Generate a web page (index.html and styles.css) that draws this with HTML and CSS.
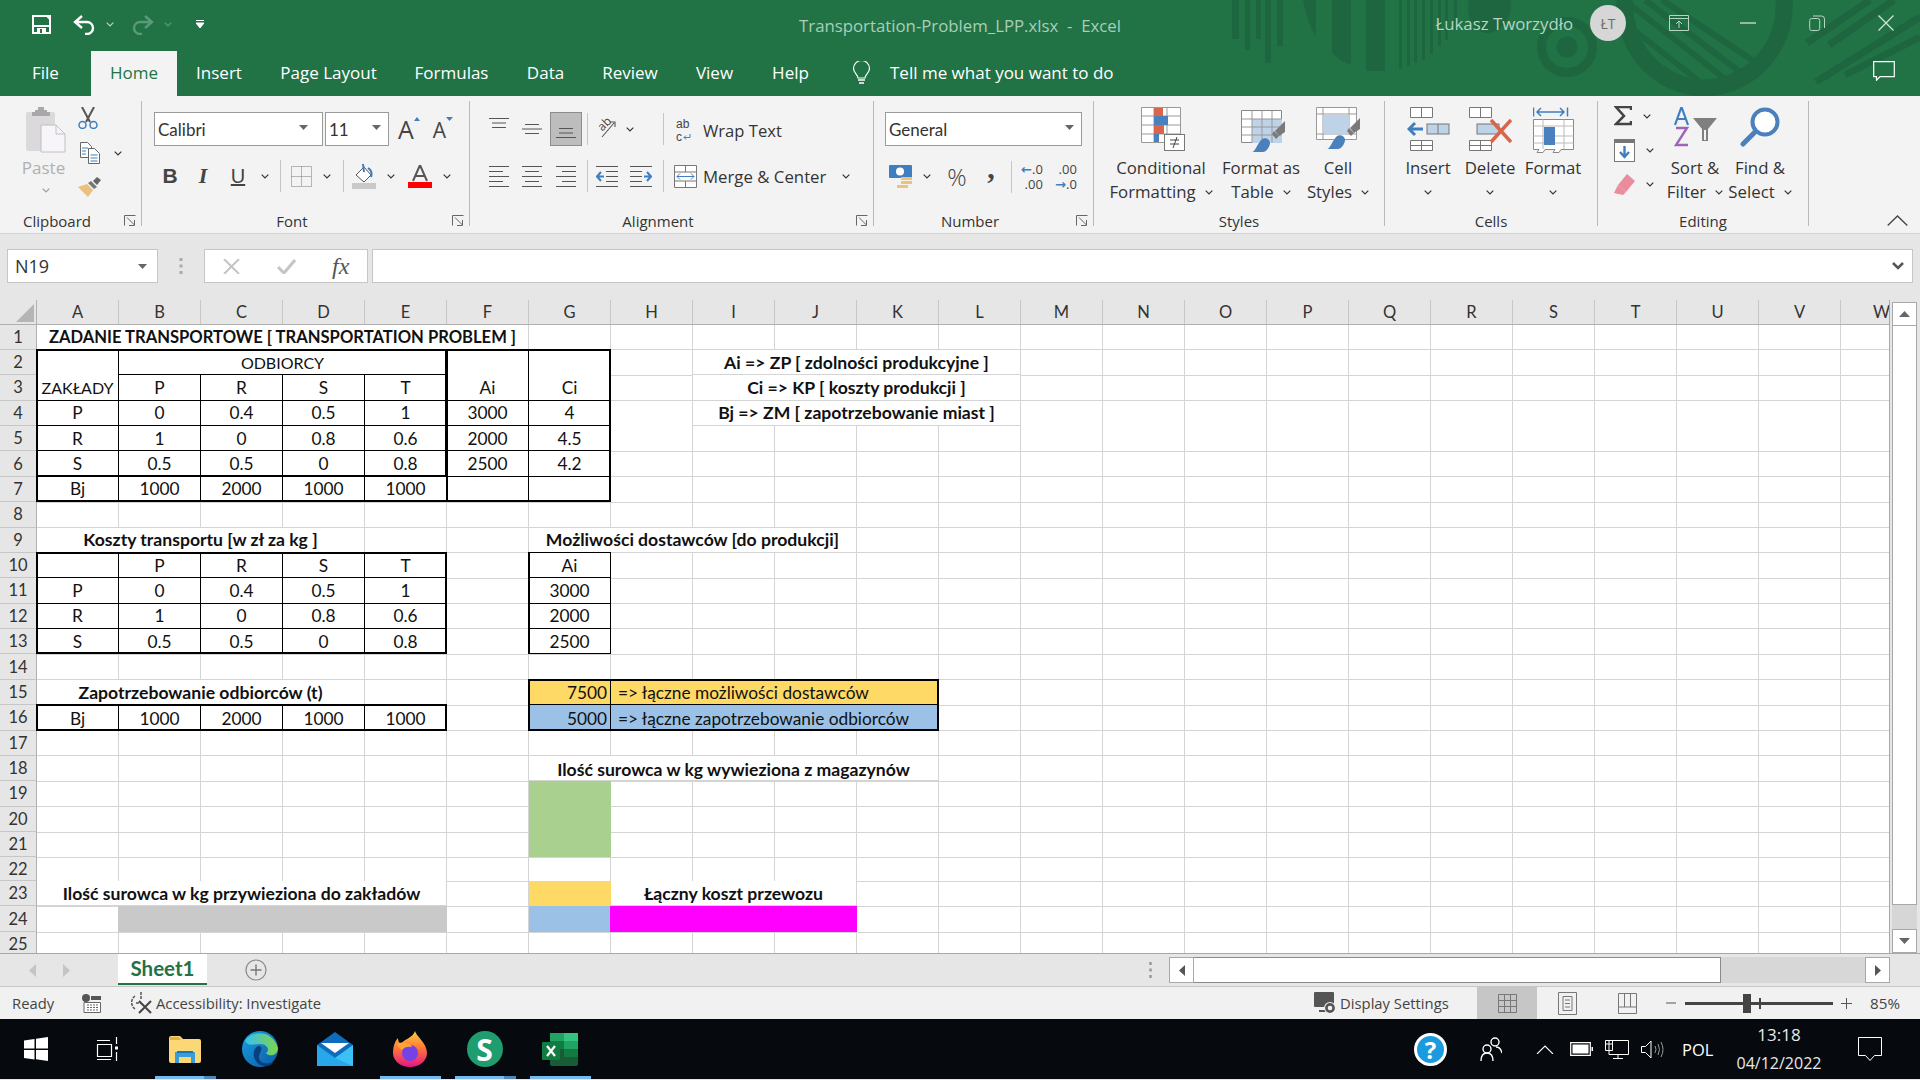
FILE: index.html
```html
<!DOCTYPE html>
<html lang="pl">
<head>
<meta charset="utf-8">
<title>Transportation-Problem_LPP.xlsx - Excel</title>
<link rel="stylesheet" href="styles.css">
</head>
<body>
<svg class="defs" width="0" height="0" aria-hidden="true">
  <symbol id="chev" viewBox="0 0 8 5"><path d="M.7.7 4 4 7.300.7" fill="none" stroke="currentColor" stroke-width="1.200"/></symbol>
  <symbol id="launch" viewBox="0 0 12 11"><path d="M.5 10.500V.5h11M3 2.500l7.500 7.500M10.500 5v5.500H5" fill="none" stroke="#666" stroke-width="1"/></symbol>
  <symbol id="caret" viewBox="0 0 9 5"><path d="M0 0h9L4.500 5z" fill="#666"/></symbol>
</svg>

<header class="top">
  <svg class="art" width="700" height="96" viewBox="1220 0 700 96" aria-hidden="true">
    <g fill="#1e6640">
      <rect x="1232" width="7" height="39"/><rect x="1245" width="5" height="50"/><rect x="1256" width="5" height="39"/><rect x="1265" width="6" height="63"/><rect x="1277" width="6" height="46"/>
      <path d="M1303 0h13v37q-9-15-13-37z"/><path d="M1332 0h19v65q-11-4-19-12z"/><rect x="1366" width="19" height="71"/>
      <rect x="1399" width="3" height="69"/><rect x="1407" width="3" height="66"/><rect x="1414" width="3" height="63"/><rect x="1422" width="3" height="60"/><rect x="1430" width="3" height="54"/><rect x="1438" width="3" height="46"/><rect x="1445" width="3" height="40"/><rect x="1454" width="3" height="30"/>
      <path d="M1469 0h41q3 12-4 22-8 12-20 11-11-2-16-13-3-10-1-20z"/>
    </g>
    <circle cx="1567" cy="47" r="25.500" fill="none" stroke="#1e6640" stroke-width="9"/>
    <circle cx="1567" cy="47" r="10.500" fill="#1e6640"/>
    <path d="M1625 0a82 82 0 0 0 77 88 82 82 0 0 0 82-88" fill="none" stroke="#1e6640" stroke-width="17"/>
    <path d="M1624 0l100 78M1645 0l95 72M1662 0l90 60M1630 27l70 55" stroke="#1e6640" stroke-width="6" fill="none"/>
    <path d="M1870 0l-63 43M1894 0l-65 45M1920 17l-104 65M1920 37l-75 38" stroke="#1e6640" stroke-width="7" fill="none"/>
  </svg>
  <div class="titlebar">
    <div class="qat">
      <svg class="q-save" width="19" height="19" viewBox="0 0 19 19"><path d="M1 1h14l3 3v14H1z" fill="none" stroke="#fff" stroke-width="2"/><path d="M1 1h17v10H1z" fill="none" stroke="#fff" stroke-width="2"/><path d="M5 13h9v5H5z" fill="#fff"/><path d="M8 14v4h2v-4z" fill="#217346"/></svg>
      <svg class="q-undo" width="23" height="20" viewBox="0 0 23 20"><path d="M9 1 2 7l7 6M2 7h12a6 6 0 0 1 0 12h-2" fill="none" stroke="#fff" stroke-width="2.400"/></svg>
      <svg class="q-uc" width="8" height="5"><use href="#chev"/></svg>
      <svg class="q-redo" width="23" height="20" viewBox="0 0 23 20"><path d="M14 1l7 6-7 6M21 7H9a6 6 0 0 0 0 12h2" fill="none" stroke="#5a9a78" stroke-width="2.400"/></svg>
      <svg class="q-rc" width="8" height="5"><use href="#chev"/></svg>
      <svg class="q-cust" width="8" height="9" viewBox="0 0 8 9"><path d="M0 .5h8M0 3h8L4 8z" stroke="#fff" fill="#fff" stroke-width="1"/></svg>
    </div>
    <div class="doc">Transportation-Problem_LPP.xlsx &nbsp;-&nbsp; Excel</div>
    <div class="account">
      <span class="user">Łukasz Tworzydło</span>
      <span class="avatar">ŁT</span>
      <span class="win"><svg width="20" height="16" viewBox="0 0 20 16"><path d="M.5.500h19v15H.5zM.5 3.500h19M10 13V6M7 9l3-3 3 3" fill="none" stroke="#b7d5c3" stroke-width="1"/></svg></span>
      <span class="win"><svg width="16" height="2" viewBox="0 0 16 2"><path d="M0 1h16" stroke="#b7d5c3" stroke-width="1.500"/></svg></span>
      <span class="win"><svg width="16" height="16" viewBox="0 0 16 16"><path d="M.7 5.500a2 2 0 0 1 2-2h6a2 2 0 0 1 2 2v8a2 2 0 0 1-2 2h-6a2 2 0 0 1-2-2zM4 1h8.500a3 3 0 0 1 3 3v9" fill="none" stroke="#b7d5c3" stroke-width="1"/></svg></span>
      <span class="win"><svg width="16" height="16" viewBox="0 0 16 16"><path d="M.5.500l15 15M15.500.500l-15 15" stroke="#d5e6db" stroke-width="1.200"/></svg></span>
    </div>
  </div>
  <nav class="tabs">
    <span class="tab tab-file">File</span>
    <span class="tab active">Home</span>
    <span class="tab">Insert</span>
    <span class="tab">Page Layout</span>
    <span class="tab">Formulas</span>
    <span class="tab">Data</span>
    <span class="tab">Review</span>
    <span class="tab">View</span>
    <span class="tab">Help</span>
    <span class="tell">
      <svg width="19" height="24" viewBox="0 0 19 24"><path d="M6 17c0-3-4.500-5-4.500-9.500a8 8 0 0 1 16 0C17.500 12 13 14 13 17z" fill="none" stroke="#fff" stroke-width="1.200"/><path d="M6 19h7M7 22h5" stroke="#fff" stroke-width="1.600"/></svg>
      Tell me what you want to do
    </span>
    <svg class="comment" width="22" height="20" viewBox="0 0 22 20"><path d="M.7.700h20.600v15H7l-3.500 3.500v-3.500H.7z" fill="none" stroke="#fff" stroke-width="1.200"/></svg>
  </nav>
</header>

<section class="ribbon">
  <div class="group g-clip">
    <div class="clip-body">
      <div class="paste">
        <svg width="41" height="46" viewBox="0 0 41 46"><rect x="0" y="5" width="29" height="39" rx="2" fill="#dcd9dc"/><path d="M9 5V3h3V0h6v3h3v2h3v4H6V5z" fill="#a8a8a8"/><path d="M15 18h15l9 9v18H15z" fill="#f7f5f9" stroke="#c0c0c0"/><path d="M30 18v9h9" fill="none" stroke="#c0c0c0"/></svg>
        <span class="paste-t">Paste</span>
        <svg class="chev dim" width="8" height="5"><use href="#chev"/></svg>
      </div>
      <div class="clip-small">
        <svg width="20" height="22" viewBox="0 0 20 22"><path d="M4 0l8 15M16 0 8 15" stroke="#555" stroke-width="2"/><circle cx="4.500" cy="18" r="3.500" fill="none" stroke="#3f7fc1" stroke-width="1.500"/><circle cx="15.500" cy="18" r="3.500" fill="none" stroke="#3f7fc1" stroke-width="1.500"/></svg>
        <div class="copy-row">
          <svg width="20" height="22" viewBox="0 0 20 22"><path d="M.5.500h7l4 4v11H.5z" fill="#fff" stroke="#666"/><path d="M8.500 6.500h6l5 5v10h-11z" fill="#fff" stroke="#666"/><path d="M2 6h6M2 9h4M2 12h4M10.500 13h7M10.500 16h7M10.500 19h7" stroke="#3f7fc1"/></svg>
          <svg class="chev" width="8" height="5"><use href="#chev"/></svg>
        </div>
        <svg width="23" height="20" viewBox="0 0 23 20"><path d="M0 10 9 7l6 6-5 7z" fill="#eac07c"/><path d="M10 6l3-2 6 6-3 2z" fill="#777"/><path d="M15 4l4-4 4 3-4 5z" fill="#666"/></svg>
      </div>
    </div>
    <div class="glabel pad">Clipboard</div>
    <svg class="launch" width="12" height="11"><use href="#launch"/></svg>
  </div>

  <div class="group g-font">
    <div class="row1">
      <div class="combo cb-font"><span>Calibri</span><svg width="9" height="5"><use href="#caret"/></svg></div>
      <div class="combo cb-size"><span>11</span><svg width="9" height="5"><use href="#caret"/></svg></div>
      <span class="fsz grow"><span class="biga">A</span><svg width="6" height="4" viewBox="0 0 6 4"><path d="M0 4l3-4 3 4z" fill="#3f7fc1"/></svg></span>
      <span class="fsz shrink"><span class="smalla">A</span><svg width="7" height="4" viewBox="0 0 7 4"><path d="M0 0h7L3.500 4z" fill="#3f7fc1"/></svg></span>
    </div>
    <div class="row2 r2-font">
      <span class="fb">B</span><span class="fi">I</span><span class="fu">U</span>
      <svg class="chev" width="8" height="5"><use href="#chev"/></svg>
      <i class="vsep"></i>
      <svg width="21" height="21" viewBox="0 0 21 21"><path d="M.5.500h20v20H.5zM10.500.5v20M.5 10.500h20" fill="none" stroke="#777" stroke-dasharray="1 1"/></svg>
      <svg class="chev" width="8" height="5"><use href="#chev"/></svg>
      <i class="vsep"></i>
      <svg width="24" height="25" viewBox="0 0 24 25"><path d="M4 11 12 3l7 8-7 7z" fill="#fff" stroke="#555"/><path d="M11 0l1 8M16 4q5 3 3 9" fill="none" stroke="#3f7fc1" stroke-width="2"/><rect y="19" width="24" height="6" fill="#c9c9c9"/></svg>
      <svg class="chev" width="8" height="5"><use href="#chev"/></svg>
      <svg width="24" height="23" viewBox="0 0 24 23"><path d="M5 16 12 0l7 16M7.500 11h9" fill="none" stroke="#555" stroke-width="2"/><rect y="17" width="24" height="6" fill="#f00"/></svg>
      <svg class="chev" width="8" height="5"><use href="#chev"/></svg>
    </div>
    <div class="glabel pad">Font</div>
    <svg class="launch" width="12" height="11"><use href="#launch"/></svg>
  </div>

  <div class="group g-align">
    <div class="row1 r1-align">
      <svg width="20" height="10" viewBox="0 0 20 10"><path d="M0 .5h20M3 5h14M3 9.500h14" stroke="#555"/></svg>
      <svg width="20" height="10" viewBox="0 0 20 10"><path d="M3 .5h14M0 5h20M3 9.500h14" stroke="#555"/></svg>
      <span class="selected"><svg width="20" height="10" viewBox="0 0 20 10"><path d="M3 .5h14M3 5h14M0 9.500h20" stroke="#555"/></svg></span>
      <i class="vsep"></i>
      <span class="orient"><span class="ab">ab</span><svg width="18" height="18" viewBox="0 0 18 18"><path d="M4 17 16 3M12 2h5v5" fill="none" stroke="#555" stroke-width="1.100"/></svg></span>
      <svg class="chev" width="8" height="5"><use href="#chev"/></svg>
      <span></span>
      <i class="vsep"></i>
      <span class="wrapic"><span class="wr">ab</span><span class="wr wr2">c<svg width="8" height="7" viewBox="0 0 8 7"><path d="M7 0v3.500H1M3 1.500 1 3.500l2 2" fill="none" stroke="#3f7fc1"/></svg></span></span>
      <span class="rtext">Wrap Text</span>
    </div>
    <div class="row2 r2-align">
      <svg width="20" height="21" viewBox="0 0 20 21"><path d="M0 .5h20M0 5.500h14M0 10.500h20M0 15.500h14M0 20.500h20" stroke="#555"/></svg>
      <svg width="20" height="21" viewBox="0 0 20 21"><path d="M0 .5h20M3 5.500h14M0 10.500h20M3 15.500h14M0 20.500h20" stroke="#555"/></svg>
      <svg width="20" height="21" viewBox="0 0 20 21"><path d="M0 .5h20M6 5.500h14M0 10.500h20M6 15.500h14M0 20.500h20" stroke="#555"/></svg>
      <i class="vsep"></i>
      <svg width="22" height="21" viewBox="0 0 22 21"><path d="M0 .5h22M10 5.500h12M10 10.500h12M10 15.500h12M0 20.500h22" stroke="#555"/><path d="M8 10.500H1M5 6l-4 4.500L5 15" fill="none" stroke="#3f7fc1" stroke-width="2"/></svg>
      <svg width="22" height="21" viewBox="0 0 22 21"><path d="M0 .5h22M0 5.500h12M0 10.500h12M0 15.500h12M0 20.500h22" stroke="#555"/><path d="M14 10.500h7M17 6l4 4.500L17 15" fill="none" stroke="#3f7fc1" stroke-width="2"/></svg>
      <i class="vsep"></i>
      <svg width="23" height="23" viewBox="0 0 23 23"><path d="M.5.500h22v22H.5zM.5 7h22M.5 16h22M11.500.5V7M11.500 16v7" fill="#fff" stroke="#777"/><path d="M3 11.500h17M6 8.500l-3 3 3 3M17 8.500l3 3-3 3" fill="none" stroke="#3f7fc1"/></svg>
      <span class="rtext merge">Merge &amp; Center <svg class="chev" width="8" height="5"><use href="#chev"/></svg></span>
    </div>
    <div class="glabel pad">Alignment</div>
    <svg class="launch" width="12" height="11"><use href="#launch"/></svg>
  </div>

  <div class="group g-num">
    <div class="row1"><div class="combo cb-num"><span>General</span><svg width="9" height="5"><use href="#caret"/></svg></div></div>
    <div class="row2 r2-num">
      <svg width="23" height="23" viewBox="0 0 23 23"><rect width="23" height="13" rx="1" fill="#3f7fc1"/><circle cx="11" cy="6.500" r="4" fill="#fff"/><path d="M12 12h11v3H12zM12 16h11v3H12zM8 20h11v3H8z" fill="#eec27a"/></svg>
      <svg class="chev" width="8" height="5"><use href="#chev"/></svg>
      <span class="pct">%</span>
      <span class="comma">,</span>
      <i class="vsep"></i>
      <span class="dec"><b>←</b>.0<br>.00</span>
      <span class="dec">.00<br><b>→</b>.0</span>
    </div>
    <div class="glabel pad">Number</div>
    <svg class="launch" width="12" height="11"><use href="#launch"/></svg>
  </div>

  <div class="group g-styles">
    <div class="cmds c3">
      <div class="cmd">
        <span class="cic shift2"><svg width="44" height="44" viewBox="0 0 44 44"><path d="M.5.500h39v35H.5zM.5 9h39M.5 18h39M.5 27h39M13 .5v35M26 .5v35" fill="#fff" stroke="#999"/><rect x="13" y="1" width="9" height="8" fill="#d9654a"/><rect x="13" y="9" width="14" height="9" fill="#4a80bb"/><rect x="13" y="18" width="10" height="9" fill="#d9654a"/><rect x="13" y="27" width="5" height="8" fill="#4a80bb"/><rect x="23.500" y="27.500" width="20" height="16" fill="#fff" stroke="#777"/><path d="M29 33h9M29 37h9M36 30l-4 11" stroke="#444" fill="none"/></svg></span>
        <span class="ctxt">Conditional</span><span class="ctxt">Formatting <svg class="chev ml" width="8" height="5"><use href="#chev"/></svg></span>
      </div>
      <div class="cmd">
        <span class="cic cic-low shift2"><svg width="44" height="42" viewBox="0 0 44 42"><path d="M.5.500h40v32H.5z" fill="#fff" stroke="#888"/><path d="M11 9h30v24H11z" fill="#bfd3e8"/><path d="M.5 9h40M.5 17h40M.5 25h40M11 .5v32M21 .5v32M31 .5v32" fill="none" stroke="#999"/><path d="M44 11v11l-6 4-4-5z" fill="#7a7a7a"/><path d="M33 21l5 5-3 3-4-5z" fill="#7a7a7a"/><path d="M11 42c3 0 5-8 10-13 3-2 8 0 8 4 0 4-4 9-7 9z" fill="#4a80bb"/></svg></span>
        <span class="ctxt">Format as</span><span class="ctxt">Table <svg class="chev ml" width="8" height="5"><use href="#chev"/></svg></span>
      </div>
      <div class="cmd">
        <span class="cic"><svg width="44" height="42" viewBox="0 0 44 42"><path d="M.5.500h40v32H.5zM.5 7h40M.5 27h40M7 .5v32M33 .5v27" fill="#fff" stroke="#999"/><rect x="8" y="8" width="25" height="19" fill="#bfd3e8"/><path d="M44 11v11l-6 4-4-5z" fill="#7a7a7a"/><path d="M33 21l5 5-3 3-4-5z" fill="#7a7a7a"/><path d="M11 42c3 0 5-8 10-13 3-2 8 0 8 4 0 4-4 9-7 9z" fill="#4a80bb"/></svg></span>
        <span class="ctxt">Cell</span><span class="ctxt">Styles <svg class="chev ml" width="8" height="5"><use href="#chev"/></svg></span>
      </div>
    </div>
    <div class="glabel">Styles</div>
  </div>

  <div class="group g-cells">
    <div class="cmds c4">
      <div class="cmd">
        <span class="cic"><svg width="43" height="44" viewBox="0 0 43 44"><path d="M3.500.500h22v10h-22zM14.500.5v10M3.500 33.500h22v10h-22zM14.500 33.500v10M3.500 38.500h22" fill="#fff" stroke="#777"/><rect x="20" y="17" width="22" height="10" fill="#bfd3e8" stroke="#777"/><path d="M31 17v10" stroke="#777"/><path d="M16 22H2M8 16l-6 6 6 6" fill="none" stroke="#3f7fc1" stroke-width="3"/></svg></span>
        <span class="ctxt">Insert</span><span class="ctxt"><svg class="chev" width="8" height="5"><use href="#chev"/></svg></span>
      </div>
      <div class="cmd">
        <span class="cic"><svg width="43" height="44" viewBox="0 0 43 44"><path d="M.5.500h22v10H.5zM11.500.5v10M.5 33.500h22v10H.5zM.5 38.500h22M11.500 33.500v10" fill="#fff" stroke="#777"/><rect x="8" y="17" width="22" height="10" fill="#bfd3e8" stroke="#777"/><path d="M22 13l20 22M42 13 22 35" stroke="#d9654a" stroke-width="3.500"/></svg></span>
        <span class="ctxt">Delete</span><span class="ctxt"><svg class="chev" width="8" height="5"><use href="#chev"/></svg></span>
      </div>
      <div class="cmd">
        <span class="cic"><svg width="41" height="46" viewBox="0 0 41 46"><path d="M.5.500v9M34.500.5v9M4 5h27M8 1 4 5l4 4M27 1l4 4-4 4" fill="none" stroke="#3f7fc1" stroke-width="1.500"/><path d="M.5 12.500h40v30H28l-2 3h-6l2-3H12l-2 3H4l2-3H.5z" fill="#fff" stroke="#888"/><path d="M.5 19h40M.5 29h40M.5 36h40M10 12.500V42M31 12.500V42" stroke="#bbb"/><rect x="11" y="20" width="11" height="18" fill="#4a80bb"/></svg></span>
        <span class="ctxt">Format</span><span class="ctxt"><svg class="chev" width="8" height="5"><use href="#chev"/></svg></span>
      </div>
    </div>
    <div class="glabel">Cells</div>
  </div>

  <div class="group g-edit">
    <div class="cmds c5">
      <div class="edit-small">
        <div class="es"><svg width="18" height="20" viewBox="0 0 18 20"><path d="M17 4V1H2l8 9-8 8h15v-3" fill="none" stroke="#444" stroke-width="2.500"/></svg><svg class="chev" width="8" height="5"><use href="#chev"/></svg></div>
        <div class="es"><svg width="21" height="23" viewBox="0 0 21 23"><rect x=".5" y=".5" width="20" height="22" fill="#fff" stroke="#777"/><rect width="21" height="4" fill="#777"/><path d="M10.500 7v11M6 13l4.500 5 4.500-5" fill="none" stroke="#3f7fc1" stroke-width="2.400"/></svg><svg class="chev" width="8" height="5"><use href="#chev"/></svg></div>
        <div class="es"><svg width="21" height="21" viewBox="0 0 21 21"><path d="M13 0l8 7-9 11-8-7z" fill="#ea8c9b"/><path d="M4 11l8 7-3 3-9-2z" fill="#ea8c9b"/></svg><svg class="chev" width="8" height="5"><use href="#chev"/></svg></div>
      </div>
      <div class="cmd">
        <span class="cic"><svg width="43" height="40" viewBox="0 0 43 40"><path d="M1 18 7.500 0 14 18M3.500 12h8" fill="none" stroke="#3f7fc1" stroke-width="2.200"/><path d="M2 21h11L2 38h12" fill="none" stroke="#9d64b8" stroke-width="2.400"/><path d="M19 11h24L34 22v12h-6V22z" fill="#7f7f7f"/><path d="M30 23v10h2V23z" fill="#f3f3f3"/></svg></span>
        <span class="ctxt">Sort &amp;</span><span class="ctxt">Filter <svg class="chev ml" width="8" height="5"><use href="#chev"/></svg></span>
      </div>
      <div class="cmd">
        <span class="cic"><svg width="40" height="40" viewBox="0 0 40 40"><circle cx="25" cy="15" r="12.500" fill="#fff" stroke="#4a80bb" stroke-width="4"/><path d="M15 25 3 37" stroke="#4a80bb" stroke-width="5" stroke-linecap="round"/></svg></span>
        <span class="ctxt">Find &amp;</span><span class="ctxt">Select <svg class="chev ml" width="8" height="5"><use href="#chev"/></svg></span>
      </div>
    </div>
    <div class="glabel">Editing</div>
  </div>
  <div class="g-end"><svg class="collapse" width="21" height="11" viewBox="0 0 21 11"><path d="M.7 10.500 10.500 1l9.800 9.500" fill="none" stroke="#444" stroke-width="1.300"/></svg></div>
</section>

<div class="fbar">
  <div class="namebox"><span>N19</span><svg width="9" height="5"><use href="#caret"/></svg></div>
  <svg class="fdots" width="4" height="16" viewBox="0 0 4 16"><path d="M2 0v3M2 6.500v3M2 13v3" stroke="#aaa" stroke-width="3"/></svg>
  <div class="fbtns">
    <svg width="17" height="15" viewBox="0 0 17 15"><path d="M1 0l15 15M16 0 1 15" stroke="#c4c4c4" stroke-width="2"/></svg>
    <svg width="19" height="15" viewBox="0 0 19 15"><path d="M1 8l6 6L18 1" fill="none" stroke="#c4c4c4" stroke-width="3"/></svg>
    <span class="fx">fx</span>
  </div>
  <div class="finput"><svg width="12" height="8" viewBox="0 0 12 8"><path d="M1 1l5 5 5-5" fill="none" stroke="#555" stroke-width="2.500"/></svg></div>
</div>

<main class="sheet">
  <div class="sheet-main">
    <div class="colhead">
      <span class="corner"><svg width="18" height="18" viewBox="0 0 18 18"><path d="M18 0v18H0z" fill="#b5b5b5"/></svg></span>
      <span>A</span><span>B</span><span>C</span><span>D</span><span>E</span><span>F</span><span>G</span><span>H</span><span>I</span><span>J</span><span>K</span><span>L</span><span>M</span><span>N</span><span>O</span><span>P</span><span>Q</span><span>R</span><span>S</span><span>T</span><span>U</span><span>V</span><span>W</span>
    </div>
    <div class="grid">
      <div class="rh r1">1</div><div class="rh r2">2</div><div class="rh r3">3</div><div class="rh r4">4</div><div class="rh r5">5</div><div class="rh r6">6</div><div class="rh r7">7</div><div class="rh r8">8</div><div class="rh r9">9</div><div class="rh r10">10</div><div class="rh r11">11</div><div class="rh r12">12</div><div class="rh r13">13</div><div class="rh r14">14</div><div class="rh r15">15</div><div class="rh r16">16</div><div class="rh r17">17</div><div class="rh r18">18</div><div class="rh r19">19</div><div class="rh r20">20</div><div class="rh r21">21</div><div class="rh r22">22</div><div class="rh r23">23</div><div class="rh r24">24</div><div class="rh r25">25</div>

      <div class="c bold capt r1 ca sp6">ZADANIE TRANSPORTOWE [ TRANSPORTATION PROBLEM ]</div>

      <div class="c nb r2 ca br"></div>
      <div class="c t caps r2 cb sp4">ODBIORCY</div>
      <div class="c nb r2 cf br"></div>
      <div class="c nb r2 cg"></div>
      <div class="c t caps r3 ca">ZAKŁADY</div><div class="c t r3 cb">P</div><div class="c t r3 cc">R</div><div class="c t r3 cd">S</div><div class="c t r3 ce">T</div><div class="c t r3 cf">Ai</div><div class="c t r3 cg">Ci</div>
      <div class="c t r4 ca">P</div><div class="c t r4 cb">0</div><div class="c t r4 cc">0.4</div><div class="c t r4 cd">0.5</div><div class="c t r4 ce">1</div><div class="c t r4 cf">3000</div><div class="c t r4 cg">4</div>
      <div class="c t r5 ca">R</div><div class="c t r5 cb">1</div><div class="c t r5 cc">0</div><div class="c t r5 cd">0.8</div><div class="c t r5 ce">0.6</div><div class="c t r5 cf">2000</div><div class="c t r5 cg">4.5</div>
      <div class="c t r6 ca">S</div><div class="c t r6 cb">0.5</div><div class="c t r6 cc">0.5</div><div class="c t r6 cd">0</div><div class="c t r6 ce">0.8</div><div class="c t r6 cf">2500</div><div class="c t r6 cg">4.2</div>
      <div class="c t r7 ca">Bj</div><div class="c t r7 cb">1000</div><div class="c t r7 cc">2000</div><div class="c t r7 cd">1000</div><div class="c t r7 ce">1000</div><div class="c t r7 cf"></div><div class="c t r7 cg"></div>
      <div class="box r2 ca sp7 h6"></div>
      <div class="box r2 ca sp5 h5"></div>
      <div class="box r2 cf sp1 h6 nolr"></div>

      <div class="c bold r9 ca sp4">Koszty transportu [w zł za kg ]</div>
      <div class="c bold r9 cg sp4">Możliwości dostawców [do produkcji]</div>
      <div class="c t r10 ca"></div><div class="c t r10 cb">P</div><div class="c t r10 cc">R</div><div class="c t r10 cd">S</div><div class="c t r10 ce">T</div>
      <div class="c t r11 ca">P</div><div class="c t r11 cb">0</div><div class="c t r11 cc">0.4</div><div class="c t r11 cd">0.5</div><div class="c t r11 ce">1</div>
      <div class="c t r12 ca">R</div><div class="c t r12 cb">1</div><div class="c t r12 cc">0</div><div class="c t r12 cd">0.8</div><div class="c t r12 ce">0.6</div>
      <div class="c t r13 ca">S</div><div class="c t r13 cb">0.5</div><div class="c t r13 cc">0.5</div><div class="c t r13 cd">0</div><div class="c t r13 ce">0.8</div>
      <div class="box r10 ca sp5 h4"></div>
      <div class="c t r10 cg">Ai</div><div class="c t r11 cg">3000</div><div class="c t r12 cg">2000</div><div class="c t r13 cg">2500</div>
      <div class="box boxl r10 cg sp1 h4"></div>

      <div class="c bold r2 ci sp4">Ai =&gt; ZP [ zdolności produkcyjne ]</div>
      <div class="c bold r3 ci sp4">Ci =&gt; KP [ koszty produkcji ]</div>
      <div class="c bold r4 ci sp4">Bj =&gt; ZM [ zapotrzebowanie miast ]</div>

      <div class="c bold low r15 ca sp4">Zapotrzebowanie odbiorców (t)</div>
      <div class="c t low r16 ca">Bj</div><div class="c t low r16 cb">1000</div><div class="c t low r16 cc">2000</div><div class="c t low r16 cd">1000</div><div class="c t low r16 ce">1000</div>
      <div class="box r16 ca sp5 h1"></div>

      <div class="c t low right yel r15 cg">7500</div>
      <div class="c t low left yel r15 ch sp4">=&gt; łączne możliwości dostawców</div>
      <div class="c t low right blu r16 cg">5000</div>
      <div class="c t low left blu r16 ch sp4">=&gt; łączne zapotrzebowanie odbiorców</div>
      <div class="box r15 cg sp5 h2"></div>

      <div class="c bold low r18 cg sp5">Ilość surowca w kg wywieziona z magazynów</div>
      <div class="grn r19 cg h3"></div>
      <div class="yel r23 cg"></div>
      <div class="c bold r23 ch sp3">Łączny koszt przewozu</div>
      <div class="blu r24 cg"></div>
      <div class="mag r24 ch sp3"></div>
      <div class="c bold r23 ca sp5">Ilość surowca w kg przywieziona do zakładów</div>
      <div class="gry r24 cb sp4"></div>
    </div>
  </div>
  <aside class="vscroll">
    <span class="sbtn"><svg width="11" height="6"><path d="M0 6h11L5.500 0z" fill="#666"/></svg></span>
    <span class="vthumb"></span>
    <span class="vtrack"></span>
    <span class="sbtn"><svg width="11" height="6"><path d="M0 0h11L5.500 6z" fill="#666"/></svg></span>
  </aside>
</main>

<div class="sheetbar">
  <svg class="nav1" width="7" height="13"><path d="M7 0v13L0 6.500z" fill="#c4c4c4"/></svg>
  <svg class="nav2" width="7" height="13"><path d="M0 0v13l7-6.500z" fill="#c4c4c4"/></svg>
  <span class="sheettab">Sheet1</span>
  <svg class="addsheet" width="22" height="22" viewBox="0 0 22 22"><circle cx="11" cy="11" r="10" fill="none" stroke="#8a8a8a" stroke-width="1.200"/><path d="M11 5.500v11M5.500 11h11" stroke="#777" stroke-width="1.400"/></svg>
  <svg class="hdots" width="3" height="16" viewBox="0 0 3 16"><path d="M1.500 0v3M1.500 6.500v3M1.500 13v3" stroke="#999" stroke-width="2.500"/></svg>
  <div class="hscroll">
    <span class="sbtn hb"><svg width="6" height="11"><path d="M6 0v11L0 5.500z" fill="#555"/></svg></span>
    <span class="hthumb"></span>
    <span class="htrack"></span>
    <span class="sbtn hb"><svg width="6" height="11"><path d="M0 0v11l6-5.500z" fill="#555"/></svg></span>
  </div>
</div>

<footer class="status">
  <span class="ready">Ready</span>
  <svg class="st-mac" width="19" height="19" viewBox="0 0 19 19"><circle cx="4" cy="4" r="4" fill="#555"/><path d="M9 2h10v4H9z" fill="#555"/><path d="M2 8.500h16.500v10H2z" fill="#fff" stroke="#666"/><path d="M5 11h11M5 13.500h11M5 16h11" stroke="#666" stroke-dasharray="2 1"/></svg>
  <svg class="st-acc" width="22" height="22" viewBox="0 0 22 22"><path d="M5 4a8 8 0 0 0 0 13M11 0v8M6 11h5" fill="none" stroke="#555" stroke-width="1.500" stroke-dasharray="3 1"/><path d="M9 9l12 12M21 9 9 21" stroke="#444" stroke-width="2"/></svg>
  <span class="acc">Accessibility: Investigate</span>
  <span class="st-right">
    <svg class="ds-ic" width="22" height="22" viewBox="0 0 22 22"><rect width="20" height="15" rx="1" fill="#555"/><path d="M5 19h8" stroke="#555" stroke-width="2"/><circle cx="16" cy="16" r="6" fill="#f1f1f1"/><circle cx="16" cy="16" r="3.600" fill="none" stroke="#555" stroke-width="2.600"/></svg>
    <span class="ds">Display Settings</span>
    <span class="vw on"><svg width="19" height="19" viewBox="0 0 19 19"><path d="M.5.500h18v18H.5zM.5 6.500h18M.5 12.500h18M6.500.5v18M12.500.5v18" fill="#c6c6c6" stroke="#777"/></svg></span>
    <span class="vw"><svg width="19" height="23" viewBox="0 0 19 23"><path d="M.5.500h18v22H.5zM5 4.500h9v14H5zM7 8h5M7 11.500h5M7 15h5" fill="none" stroke="#777"/></svg></span>
    <span class="vw"><svg width="19" height="21" viewBox="0 0 19 21"><path d="M.5.500h18v20H.5zM.5 14h18M6.500.5V14M12.500.5V14" fill="none" stroke="#777"/></svg></span>
    <svg class="zm" width="10" height="2"><path d="M0 1h10" stroke="#555"/></svg>
    <span class="slider"><i class="sl-tick"></i><i class="sl-thumb"></i></span>
    <svg class="zp" width="11" height="11"><path d="M0 5.500h11M5.500 0v11" stroke="#555"/></svg>
    <span class="pc85">85%</span>
  </span>
</footer>

<div class="taskbar">
  <svg class="tb-win" width="24" height="24" viewBox="0 0 24 24"><path d="M0 3.500 10.500 2v9.500H0zM12 1.800 24 0v11.500H12zM0 13h10.500v9.500L0 21zM12 13h12v11l-12-1.700z" fill="#fff"/></svg>
  <svg class="tb-task" width="24" height="24" viewBox="0 0 24 24"><path d="M1 3.500h13M1.500 7.500h14v12h-14zM1 22.500h14M20.500 0v7M20.500 15v9" fill="none" stroke="#fff" stroke-width="1.200"/><rect x="19" y="9.500" width="3" height="3" fill="#fff"/></svg>
  <span class="tb-app first open split"><svg width="32" height="27" viewBox="0 0 32 27"><path d="M0 2a2 2 0 0 1 2-2h9l3 3h16a2 2 0 0 1 2 2v20a2 2 0 0 1-2 2H2a2 2 0 0 1-2-2z" fill="#fbd775"/><path d="M1 1h9l2 3H1z" fill="#e3b14a"/><path d="M6 16h20v11h-4v-6H10v6H6z" fill="#3a9dd8"/><path d="M8 15h16v2H8z" fill="#1578bf"/></svg></span>
  <span class="tb-app"><svg width="36" height="36" viewBox="0 0 36 36"><defs><linearGradient id="eg" x1="0" y1="0" x2="1" y2="1"><stop offset="0" stop-color="#1aa0e0"/><stop offset="1" stop-color="#0c59a4"/></linearGradient><linearGradient id="eg2" x1="0" y1="0" x2="1" y2="0"><stop offset="0" stop-color="#35c1f1"/><stop offset="1" stop-color="#7fd44a"/></linearGradient></defs><circle cx="18" cy="18" r="18" fill="url(#eg)"/><path d="M3 10C8 0 30-3 36 17c0 8-9 9-12 5 4-2 2-9-6-9C10 13 7 16 3 10z" fill="url(#eg2)"/><path d="M16 15c-6 3-6 14 2 19 6 2 11 1 14-3-10 4-18-1-14-9 1-3 3-5 0-7z" fill="#0a3f7d"/></svg></span>
  <span class="tb-app"><svg width="36" height="34" viewBox="0 0 36 34"><path d="M0 13 18 0l18 13v21H0z" fill="#0f6cbd"/><path d="M4 11h28L18 21z" fill="#fff"/><path d="M0 13l18 13 18-13v21H0z" fill="#28a8ea"/><path d="M18 26 36 13v21z" fill="#50d9ff" opacity=".5"/></svg></span>
  <span class="tb-app open"><svg width="34" height="36" viewBox="0 0 34 36"><defs><linearGradient id="ff" x1="0" y1="0" x2="0" y2="1"><stop offset="0" stop-color="#ffce3b"/><stop offset=".5" stop-color="#ff7139"/><stop offset="1" stop-color="#e31587"/></linearGradient></defs><path d="M22 0c1 5 12 12 12 22a17 14 0 0 1-34 0C0 14 3 9 5 7c0 4 2 5 3 6 3-5 12-6 14-13z" fill="url(#ff)"/><circle cx="17" cy="22" r="8" fill="#7542e5"/><path d="M4 13c6-3 14-1 15 3-4-1-8 0-10 3-2-1-4-3-5-6z" fill="#ffa436"/></svg></span>
  <span class="tb-app open split"><span class="sicon">S</span></span>
  <span class="tb-app open"><svg width="36" height="33" viewBox="0 0 36 33"><rect x="8" width="28" height="33" rx="2" fill="#185c37"/><rect x="22" width="14" height="8" fill="#33c481"/><rect x="8" width="14" height="8" fill="#21a366"/><rect x="22" y="8" width="14" height="8" fill="#21a366"/><rect x="8" y="8" width="14" height="8" fill="#107c41"/><rect x="22" y="16" width="14" height="8" fill="#107c41"/><rect y="9" width="18" height="18" rx="1" fill="#107c41"/><path d="M5 13l8 10M13 13 5 23" stroke="#fff" stroke-width="2.200"/></svg></span>
  <span class="tray">
    <span class="help">?</span>
    <svg class="t-people" width="22" height="24" viewBox="0 0 22 24"><circle cx="15" cy="5" r="4" fill="none" stroke="#fff" stroke-width="1.400"/><circle cx="7" cy="12" r="4" fill="none" stroke="#fff" stroke-width="1.400"/><path d="M1 24c0-5 2-8 6-8s6 3 6 8M16 10c3 0 5 2 6 6" fill="none" stroke="#fff" stroke-width="1.400"/></svg>
    <svg class="t-up" width="18" height="9" viewBox="0 0 18 9"><path d="M1 9l8-8 8 8" fill="none" stroke="#fff" stroke-width="1.100"/></svg>
    <svg class="t-bat" width="23" height="14" viewBox="0 0 23 14"><path d="M.7.700h19.600v12.600H.7z" fill="none" stroke="#fff" stroke-width="1.200"/><rect x="2.500" y="2.500" width="16" height="9" fill="#fff"/><rect x="21.500" y="5" width="1.500" height="4" fill="#fff"/></svg>
    <svg class="t-net" width="24" height="19" viewBox="0 0 24 19"><path d="M4 .5h19.500v14H4zM13 14.500v4M8 18.500h10M.5.500h7v10h-7zM.5 4h7" fill="#060a0e" stroke="#fff"/></svg>
    <svg class="t-vol" width="24" height="19" viewBox="0 0 24 19"><path d="M.5 6.500h4L10 1v17l-5.500-5.500h-4z" fill="none" stroke="#fff"/><path d="M14 6q2 3.500 0 7M17 4q3 5.500 0 11M20 2q4 7.500 0 15" fill="none" stroke="#999"/></svg>
    <span class="t-lang">POL</span>
    <span class="clock"><span class="c-time">13:18</span><span>04/12/2022</span></span>
    <svg class="t-note" width="24" height="25" viewBox="0 0 24 25"><path d="M.5.500h23v18h-7l-4.500 5-4.500-5h-7z" fill="none" stroke="#fff"/></svg>
  </span>
</div>
</body>
</html>
```

FILE: styles.css
```css
* { box-sizing: border-box; }
html, body { margin: 0; padding: 0; }
body {
  width: 1920px; height: 1080px; overflow: hidden;
  display: flex; flex-direction: column;
  font-family: "Open Sans", "Liberation Sans", sans-serif;
  color: #333; background: #e6e6e6;
}
.defs { position: absolute; }
svg { display: block; flex: none; }

/* top */
.top { position: relative; height: 96px; background: #217346; color: #fff; flex: none; overflow: hidden; }
.art { position: absolute; right: 0; top: 0; }
.titlebar { position: relative; height: 51px; display: grid; grid-template-columns: 1fr auto 1fr; }
.qat { display: flex; align-items: center; padding: 0 0 2px 32px; }
.q-undo { margin-left: 22px; }
.q-uc { margin-left: 10px; color: #b7d5c3; }
.q-redo { margin-left: 17px; }
.q-rc { margin-left: 10px; color: #5a9a78; }
.q-cust { margin-left: 24px; }
.doc { align-self: center; font-size: 16.800px; color: #a9cfb8; padding-bottom: 1px; }
.account { display: flex; align-items: center; justify-content: flex-end; padding-bottom: 5px; }
.user { font-size: 16.800px; color: #b7d5c3; margin-right: 17px; }
.avatar { width: 36px; height: 36px; border-radius: 50%; background: #d6d6d6; color: #6b6b6b; font-size: 14px; display: flex; align-items: center; justify-content: center; margin-right: 18px; }
.win { width: 69px; display: flex; justify-content: center; }
.tabs { position: relative; height: 45px; display: grid; grid-template-columns: 91px 86px 84px 135px 111px 77px 92px 77px 75px auto 1fr; align-items: stretch; font-size: 17px; }
.tab { display: flex; align-items: center; justify-content: center; padding-bottom: 2px; }
.tab-file { justify-content: flex-start; padding-left: 32px; }
.tab.active { background: #f3f3f3; color: #217346; }
.tell { display: flex; align-items: center; gap: 19px; margin-left: 24px; padding-bottom: 2px; }
.comment { justify-self: end; align-self: center; margin-right: 25px; margin-bottom: 6px; }

/* ribbon */
.ribbon { height: 138px; flex: none; background: #f3f3f3; border-bottom: 1px solid #d2d2d2; display: flex; align-items: flex-start; font-size: 15px; color: #333; }
.group { position: relative; margin-top: 5px; height: 125px; border-right: 1px solid #b8b8b8; display: flex; flex-direction: column; flex: none; }
.g-clip { width: 142px; }
.g-font { width: 328px; padding-left: 12px; }
.g-align { width: 404px; padding-left: 14px; }
.g-num { width: 220px; padding-left: 11px; }
.g-styles { width: 291px; padding-left: 14px; }
.g-cells { width: 213px; padding-left: 15px; }
.g-edit { width: 211px; padding-left: 16px; }
.g-end { flex: 1; height: 130px; display: flex; justify-content: flex-end; align-items: flex-end; padding-right: 12px; }
.glabel { margin-top: auto; margin-bottom: -4px; height: 18px; line-height: 18px; text-align: center; font-size: 15px; margin-left: -16px; }
.g-clip .glabel { margin-left: 0; }
.g-font .glabel { margin-left: -12px; }
.g-align .glabel { margin-left: -14px; }
.g-num .glabel { margin-left: -11px; }
.g-styles .glabel { margin-left: -14px; }
.g-cells .glabel { margin-left: -15px; }
.glabel.pad { padding-right: 27px; }
.launch { position: absolute; right: 5px; bottom: 0; }

.clip-body { display: flex; padding-left: 23px; padding-top: 6px; }
.paste { width: 45px; display: flex; flex-direction: column; align-items: center; }
.paste > svg:first-child { align-self: flex-start; margin-left: 3px; }
.paste-t { color: #b0b0b0; font-size: 17px; line-height: 24px; margin: 3px 4px 0 0; }
.chev.dim { opacity: .45; margin-top: 8px; }
.clip-small { margin-left: 10px; display: flex; flex-direction: column; gap: 13px; }
.copy-row { display: flex; align-items: center; gap: 14px; padding-left: 2px; }

.row1 { display: flex; margin-top: 11px; height: 34px; flex: none; align-items: center; }
.row2 { display: grid; margin-top: 14px; height: 32px; flex: none; align-items: center; justify-items: center; }
.combo { height: 34px; background: #fff; border: 1px solid #9a9a9a; display: flex; align-items: center; justify-content: space-between; padding: 0 14px 0 3px; color: #333; }
.combo svg { margin-top: -3px; }
.cb-font { width: 169px; font-family: "Lato", sans-serif; font-size: 17px; }
.cb-size { width: 64px; margin-left: 2px; padding-right: 7px; font-family: "Lato", sans-serif; font-size: 17px; }
.cb-num { width: 197px; font-family: "Lato", sans-serif; font-size: 17px; padding-right: 7px; }
.fsz { display: flex; align-items: flex-start; height: 28px; }
.grow { margin-left: 9px; }
.shrink { margin-left: 13px; }
.fsz svg { margin-top: 2px; }
.biga { font-size: 25px; line-height: 28px; color: #444; }
.smalla { font-size: 21px; line-height: 30px; color: #444; }
.r2-font { grid-template-columns: 32px 34px 36px 18px 12px 30px 22px 10px 32px 22px 36px 18px; }
.fb { font: bold 21px "Liberation Sans", sans-serif; color: #444; }
.fi { font: italic bold 22px "Liberation Serif", serif; color: #444; }
.fu { font: 20px "Liberation Sans", sans-serif; color: #444; text-decoration: underline; }
.vsep { display: block; width: 1px; height: 32px; background: #c6c6c6; }
.r1-align { display: grid; grid-template-columns: 30px 36px 32px 10px 30px 16px 22px 7px 36px auto; justify-items: center; }
.r2-align { grid-template-columns: 30px 36px 32px 10px 30px 38px 7px 36px auto; }
.selected { width: 32px; height: 34px; background: #bdbdbd; border: 1px solid #8c8c8c; display: flex; align-items: flex-end; justify-content: center; padding-bottom: 7px; }
.r1-align > svg:first-child { align-self: start; margin-top: 6px; }
.r1-align > svg:nth-child(2) { margin-top: -1px; margin-bottom: 0; }
.orient { position: relative; width: 18px; height: 18px; display: block; }
.ab { position: absolute; left: -1px; top: -5px; font-size: 12px; color: #444; transform: rotate(-45deg); }
.wrapic { display: flex; flex-direction: column; width: 18px; font: 12px/13px "Liberation Sans", sans-serif; color: #444; margin-top: 3px; }
.wr { display: block; }
.wr2 { display: flex; align-items: center; gap: 1px; }
.rtext { justify-self: start; font-size: 16.600px; }
.r1-align .rtext { padding-top: 2px; }
.merge { display: flex; align-items: center; font-size: 16.800px; }
.merge .chev { margin-left: 16px; }
.r2-num { grid-template-columns: 31px 22px 38px 30px 10px 32px 36px; }
.pct { font-size: 24px; color: #444; font-weight: 300; }
.comma { font: bold 30px/20px "Liberation Serif", serif; color: #444; margin-top: -18px; }
.dec { font: 13px/15px "Open Sans", sans-serif; color: #444; text-align: right; white-space: nowrap; }
.dec b { color: #3f7fc1; font-family: "DejaVu Sans", sans-serif; }

.cmds { display: grid; }
.c3 { grid-template-columns: 106px 94px 60px; }
.c4 { grid-template-columns: 56px 68px 58px; }
.c5 { grid-template-columns: 50px 62px 68px; }
.cmd { display: flex; flex-direction: column; align-items: center; }
.cic { height: 55px; display: flex; align-items: flex-start; padding-top: 6px; }
.cic-low { padding-top: 9px; }
.shift2 { padding-left: 4px; }
.ctxt { display: flex; align-items: center; height: 24px; line-height: 24px; white-space: nowrap; font-size: 16.800px; }
.chev.ml { margin-left: 9px; }
.edit-small { display: flex; flex-direction: column; gap: 12px; padding-top: 4px; }
.es { display: flex; align-items: center; gap: 11px; height: 22px; }

/* formula bar */
.fbar { height: 66px; flex: none; display: flex; align-items: flex-start; padding-top: 15px; background: #e6e6e6; }
.namebox { margin-left: 7px; width: 151px; height: 34px; background: #fff; border: 1px solid #c6c6c6; display: flex; align-items: center; justify-content: space-between; padding: 0 10px 0 7px; font-size: 18px; color: #333; }
.fdots { margin: 9px 21px 0; }
.fbtns { width: 164px; height: 34px; background: #fff; border: 1px solid #c6c6c6; display: flex; align-items: center; padding-left: 18px; gap: 37px; }
.fx { font: italic 24px "Liberation Serif", serif; color: #555; margin-left: -1px; }
.finput { margin-left: 4px; width: 1541px; height: 34px; background: #fff; border: 1px solid #c6c6c6; display: flex; align-items: center; justify-content: flex-end; padding-right: 8px; }

/* sheet */
.sheet { height: 654px; flex: none; display: flex; background: #fff; border-bottom: 1px solid #a8a8a8; overflow: hidden; }
.sheet-main { width: 1890px; flex: none; overflow: hidden; border-right: 1px solid #a8a8a8; }
.colhead { height: 24.500px; display: grid; grid-template-columns: 37px repeat(23, 82px); background: #e6e6e6; border-bottom: 1px solid #b0b0b0; font: 16.500px "Lato", sans-serif; color: #333; }
.colhead span { display: flex; align-items: center; justify-content: center; border-right: 1px solid #c6c6c6; }
.corner.corner { justify-content: flex-end; align-items: flex-end; padding: 0 2px 2px 0; border-right: 1px solid #b0b0b0; }
.grid {
  display: grid; grid-template-columns: 37px repeat(23, 82px);
  grid-template-rows: repeat(21, 25.375px) 24px 25px 26px 25px; height: 629px;
  font: 17.300px "Lato", sans-serif; color: #111;
  background-color: #fff;
  background-image:
    repeating-linear-gradient(to right, transparent 0 81px, #d4d4d4 81px 82px),
    repeating-linear-gradient(to bottom, transparent 0 24.375px, #d4d4d4 24.375px 25.375px),
    linear-gradient(#d4d4d4, #d4d4d4),
    linear-gradient(#d4d4d4, #d4d4d4),
    linear-gradient(#d4d4d4, #d4d4d4);
  background-size: auto, 100% 533px, 100% 1px, 100% 1px, 100% 1px;
  background-repeat: repeat, no-repeat, no-repeat, no-repeat, no-repeat;
  background-position: 37px 0, 0 0, 0 556px, 0 581px, 0 607px;
}
.rh { grid-column: 1; font-size: 16.500px; background: #e6e6e6; border-right: 1px solid #b0b0b0; border-bottom: 1px solid #c6c6c6; display: flex; align-items: center; justify-content: center; color: #333; }
.c { display: flex; align-items: center; justify-content: center; background: #fff; white-space: nowrap; overflow: visible; }
.bold { font-weight: 700; font-size: 17.600px; border-bottom: 1px solid #d4d4d4; border-right: 1px solid #d4d4d4; }
.capt { font-size: 16.600px; }
.caps { font-size: 16px; }
.low { padding-top: 2px; }
.t { border-right: 1px solid #000; border-bottom: 1px solid #000; }
.nb { background: #fff; }
.br { border-right: 1px solid #000; }
.left { justify-content: flex-start; padding-left: 7px; }
.right { justify-content: flex-end; padding-right: 3px; }
.c.yel, .yel { background: #ffd966; }
.c.blu, .blu { background: #9bc2e6; }
.grn { background: #a9d08e; }
.mag { background: #f0f; margin-left: -1px; }
.gry { background: #c9c9c9; margin-left: -1px; }
.box { border: 2px solid #000; margin: -1px 0 0 -1px; z-index: 2; }
.boxl { border-width: 1px 0 0 2px; }
.nolr { border-width: 0 0 0 2px; margin-top: 0; }

.r1 { grid-row-start: 1; } .r2 { grid-row-start: 2; } .r3 { grid-row-start: 3; } .r4 { grid-row-start: 4; } .r5 { grid-row-start: 5; }
.r6 { grid-row-start: 6; } .r7 { grid-row-start: 7; } .r8 { grid-row-start: 8; } .r9 { grid-row-start: 9; } .r10 { grid-row-start: 10; }
.r11 { grid-row-start: 11; } .r12 { grid-row-start: 12; } .r13 { grid-row-start: 13; } .r14 { grid-row-start: 14; } .r15 { grid-row-start: 15; }
.r16 { grid-row-start: 16; } .r17 { grid-row-start: 17; } .r18 { grid-row-start: 18; } .r19 { grid-row-start: 19; } .r20 { grid-row-start: 20; }
.r21 { grid-row-start: 21; } .r22 { grid-row-start: 22; } .r23 { grid-row-start: 23; } .r24 { grid-row-start: 24; } .r25 { grid-row-start: 25; }
.ca { grid-column-start: 2; } .cb { grid-column-start: 3; } .cc { grid-column-start: 4; } .cd { grid-column-start: 5; } .ce { grid-column-start: 6; }
.cf { grid-column-start: 7; } .cg { grid-column-start: 8; } .ch { grid-column-start: 9; } .ci { grid-column-start: 10; }
.sp1 { grid-column-end: span 1; } .sp3 { grid-column-end: span 3; } .sp4 { grid-column-end: span 4; } .sp5 { grid-column-end: span 5; } .sp6 { grid-column-end: span 6; } .sp7 { grid-column-end: span 7; }
.h1 { grid-row-end: span 1; } .h2 { grid-row-end: span 2; } .h3 { grid-row-end: span 3; } .h4 { grid-row-end: span 4; } .h5 { grid-row-end: span 5; } .h6 { grid-row-end: span 6; }

.vscroll { flex: 1; display: flex; flex-direction: column; align-items: center; background: #e6e6e6; padding-top: 2px; }
.sbtn { width: 25px; height: 24px; background: #fff; border: 1px solid #a8a8a8; display: flex; align-items: center; justify-content: center; flex: none; }
.vscroll .sbtn:first-child { margin-right: 1px; }
.vthumb { width: 25px; height: 579px; background: #fff; border: 1px solid #a8a8a8; border-top: 0; flex: none; margin-right: 1px; }
.vtrack { width: 25px; flex: 1; background: #d6d6d6; margin-right: 1px; }
.vscroll .sbtn:last-child { margin-right: 1px; }

/* sheet tabs */
.sheetbar { height: 33px; flex: none; display: flex; align-items: center; background: #e6e6e6; border-bottom: 1px solid #c6c6c6; }
.nav1 { margin-left: 29px; }
.nav2 { margin-left: 27px; }
.sheettab { margin-left: 48px; width: 89px; height: 31px; background: #fff; border-bottom: 2px solid #217346; color: #217346; font: 700 20.500px "Lato", sans-serif; display: flex; align-items: center; justify-content: center; align-self: flex-start; padding-bottom: 2px; }
.addsheet { margin-left: 38px; }
.hdots { margin-left: 882px; }
.hscroll { margin-left: 17px; width: 721px; height: 26px; display: flex; background: #d7d7d7; }
.hb { width: 25px; height: 26px; }
.hthumb { width: 527px; background: #fff; border: 1px solid #8a8a8a; border-left: 0; }
.htrack { flex: 1; }

/* status */
.status { height: 32px; flex: none; display: flex; align-items: center; background: #f1f1f1; font-size: 14.800px; color: #444; }
.ready { margin-left: 12px; width: 70px; }
.st-acc { margin-left: 29px; }
.acc { margin-left: 4px; }
.st-right { margin-left: auto; display: flex; align-items: center; height: 100%; }
.ds { margin-left: 4px; width: 137px; white-space: nowrap; }
.vw { width: 60px; height: 100%; display: flex; align-items: center; justify-content: center; }
.vw.on { background: #c6c6c6; }
.zm { margin-left: 9px; }
.slider { position: relative; margin-left: 9px; width: 148px; height: 3px; background: #444; display: block; }
.sl-thumb { position: absolute; left: 58px; top: -8px; width: 8px; height: 19px; background: #444; }
.sl-tick { position: absolute; left: 74px; top: -4px; width: 2px; height: 11px; background: #444; }
.zp { margin-left: 8px; }
.pc85 { margin-left: 18px; margin-right: 20px; font-size: 15.200px; }

/* taskbar */
.taskbar { height: 60px; flex: none; background: #060a0e; color: #fff; display: flex; align-items: center; position: relative; }
.tb-win { margin-left: 24px; }
.tb-task { margin-left: 48px; }
.tb-app { width: 61px; height: 60px; display: flex; align-items: center; justify-content: center; border-bottom: 3px solid transparent; flex: none; margin-right: 14px; padding-right: 2px; }
.tb-app svg { margin-top: 3px; }
.first { margin-left: 35px; }
.open { border-bottom-color: #76b9ed; }
.split { border-image: linear-gradient(to right, #76b9ed 48px, #4f86b5 48px) 1; }
.sicon { width: 36px; height: 36px; margin-top: 3px; border-radius: 50%; background: #1f9d6f; color: #fff; font: 700 30px "Open Sans", sans-serif; display: flex; align-items: center; justify-content: center; }
.tray { margin-left: auto; display: flex; align-items: center; }
.help { width: 33px; height: 33px; border-radius: 50%; background: #1a9be0; border: 3px solid #fff; color: #fff; font: 700 24px "Open Sans", sans-serif; display: flex; align-items: center; justify-content: center; }
.t-people { margin-left: 33px; }
.t-up { margin-left: 34px; }
.t-bat { margin-left: 16px; }
.t-net { margin-left: 12px; }
.t-vol { margin-left: 12px; }
.t-lang { margin-left: 17px; font-size: 16.500px; width: 48px; white-space: nowrap; }
.clock { margin-left: 0; display: flex; flex-direction: column; align-items: center; width: 98px; font-size: 16px; line-height: 28px; color: #e8e8e8; }
.c-time { font-size: 17px; }
.t-note { margin-left: 30px; margin-right: 38px; }
```
